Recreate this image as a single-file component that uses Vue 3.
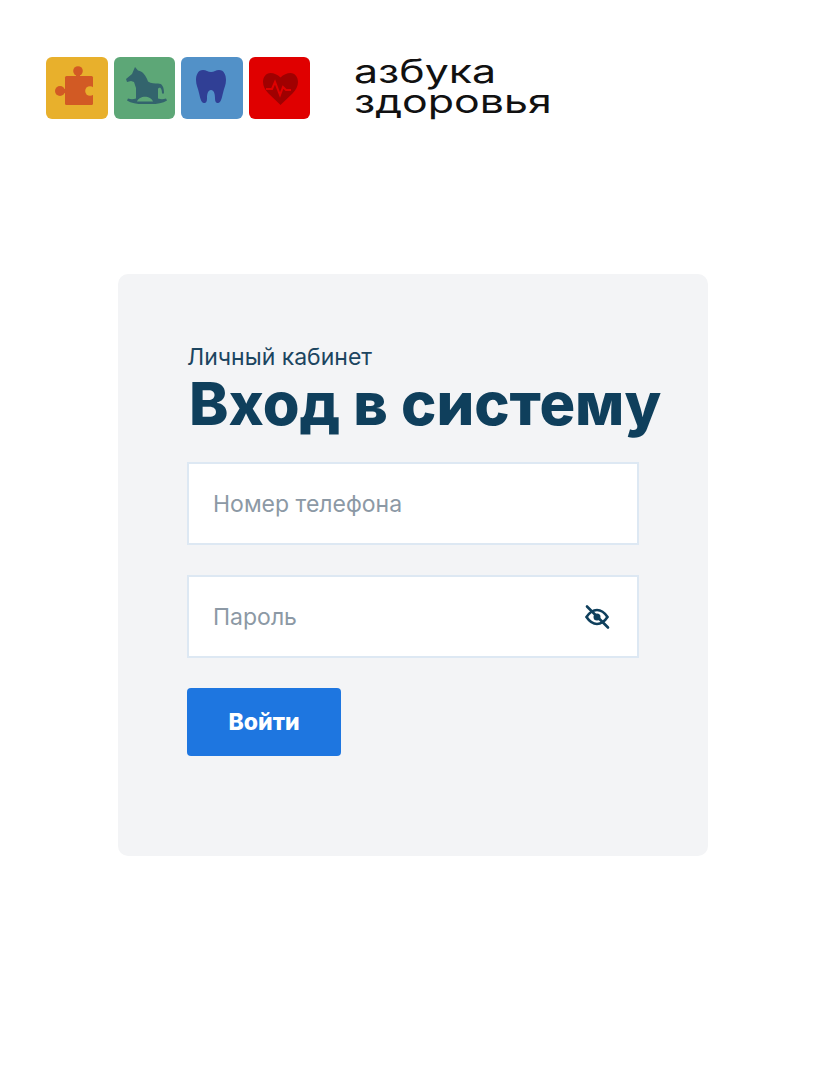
<script setup>
import { ref } from 'vue'

const phone = ref('')
const password = ref('')
</script>

<template>
  <main class="page">
    <header class="logo">
      <div class="tiles">
        <div class="tile yellow">
          <svg viewBox="0 0 62 62" width="62" height="62">
            <rect x="19" y="19" width="28" height="29" rx="1.500" fill="#d25a24" />
            <circle cx="32" cy="14" r="4.800" fill="#d25a24" />
            <rect x="30" y="16" width="4" height="4" fill="#d25a24" />
            <circle cx="14" cy="34" r="5" fill="#d25a24" />
            <rect x="16" y="32" width="4" height="4" fill="#d25a24" />
            <circle cx="44" cy="34" r="4.800" fill="#e8b02c" />
            <rect x="44" y="31.500" width="4" height="5" fill="#e8b02c" />
          </svg>
        </div>
        <div class="tile green">
          <svg viewBox="0 0 62 62" width="62" height="62">
            <path
              fill="#33646d"
              fill-rule="evenodd"
              d="M21 10l3 3.500c5 1 8 5 10 11 3 2 7 2 10 2 4 0 6 3 6 10h-2c0-3-.6-5-2-6l-2 1v10c3 1 5 1 8 0l1 2c-5 3-12 4-20 3.500-8 .5-15-.5-20-3.500l1-2c3 1 5 1 8 0V31l-2-6-3-1-4 1-1-3 6-5zM23 44.500c2-6.500 14-6.500 16 0z"
            />
          </svg>
        </div>
        <div class="tile blue">
          <svg viewBox="0 0 62 62" width="62" height="62">
            <path fill="#303f95" d="M22 13c3 0 5 2 8 2s5-2 8-2c5 0 7 5 7 10 0 5-2 8-3 13-1 4-2 10-5 10-2 0-3-1-3-5 0-4-1-8-4-8s-4 4-4 8c0 4-1 5-3 5-3 0-4-6-5-10-1-5-3-8-3-13 0-5 2-10 7-10z" />
          </svg>
        </div>
        <div class="tile red">
          <svg viewBox="0 0 62 62" width="62" height="62">
            <path fill="#a00000" d="M31.500 20.500c3-3 6.500-4.500 10-4.500 4.500 0 7.500 4 7.500 9 0 4-2 8-5.500 11.500L31.500 48 19.500 36.500C16 33 14 29 14 25c0-5 3-9 7.500-9 3.500 0 7 1.500 10 4.500z" />
            <path fill="none" stroke="#e00000" stroke-width="2" d="M17 32h6l3-7 5 13 3-8 3 3h5" />
          </svg>
        </div>
      </div>
      <div class="brand">
        <span>азбука</span>
        <span>здоровья</span>
      </div>
    </header>

    <section class="card">
      <p class="eyebrow">Личный кабинет</p>
      <h1 class="title">Вход в систему</h1>
      <form class="form" @submit.prevent>
        <label class="field">
          <input v-model="phone" type="text" placeholder="Номер телефона" />
        </label>
        <label class="field">
          <input v-model="password" type="password" placeholder="Пароль" />
          <svg class="eye" viewBox="0 0 28 28" width="28" height="28" fill="none" stroke="#0f3f5c" stroke-width="2.600" stroke-linecap="round">
            <path d="M3.500 14c3-4.500 6.500-7 10.500-7s7.500 2.500 10.500 7c-3 4.500-6.500 7-10.500 7s-7.500-2.500-10.500-7z" />
            <circle cx="14" cy="14" r="3.500" fill="#0f3f5c" stroke="none" />
            <path d="M4 3.500l21 21" />
          </svg>
        </label>
        <button class="submit" type="submit">Войти</button>
      </form>
    </section>
  </main>
</template>

<style>
html,
body {
  background: #fff;
}
</style>

<style scoped>
.page {
  width: 817px;
  height: 1070px;
  box-sizing: border-box;
  padding: 57px 0 0 46px;
  font-family: "Inter", "Open Sans", sans-serif;
}

.logo {
  display: flex;
  align-items: center;
  gap: 44px;
}

.tiles {
  display: flex;
  gap: 6px;
}

.tile {
  width: 61.500px;
  height: 62px;
  border-radius: 6px;
  overflow: hidden;
}

.tile svg {
  display: block;
}

.yellow {
  background: #e8b02c;
}

.green {
  background: #5da777;
}

.blue {
  background: #5291c8;
}

.red {
  background: #e00000;
}

.brand {
  display: flex;
  flex-direction: column;
  width: 200px;
  margin-top: -2px;
  font-family: "Inter", sans-serif;
  font-size: 32px;
  line-height: 30px;
  font-weight: 400;
  color: #111;
  transform: scaleX(1.34);
  transform-origin: left center;
}

.card {
  width: 590px;
  height: 582px;
  box-sizing: border-box;
  margin: 155px 0 0 72px;
  padding: 71px 69px 0;
  background: #f3f4f6;
  border-radius: 10px;
}

.eyebrow {
  margin: 0;
  font-size: 23px;
  line-height: 24px;
  color: #1c4560;
}

.title {
  margin: 0 -30px 25px 2px;
  font-family: "Inter", sans-serif;
  font-size: 59.500px;
  line-height: 68px;
  font-weight: 800;
  color: #0f3f5c;
  white-space: nowrap;
}

.form {
  display: flex;
  flex-direction: column;
  align-items: flex-start;
}

.field {
  position: relative;
  display: block;
  width: 452px;
  height: 83px;
  margin-bottom: 30px;
}

.field input {
  width: 100%;
  height: 100%;
  box-sizing: border-box;
  padding: 0 24px;
  background: #fff;
  border: 2px solid #dde8f3;
  outline: none;
  font-family: inherit;
  font-size: 23px;
}

.field input::placeholder {
  color: #8c99a5;
  opacity: 1;
}

.eye {
  position: absolute;
  right: 28px;
  top: 28px;
}

.submit {
  width: 154px;
  height: 68px;
  background: #1e76e0;
  border: none;
  border-radius: 4px;
  color: #fff;
  font-family: "Inter", sans-serif;
  font-size: 23px;
  font-weight: 800;
}
</style>
